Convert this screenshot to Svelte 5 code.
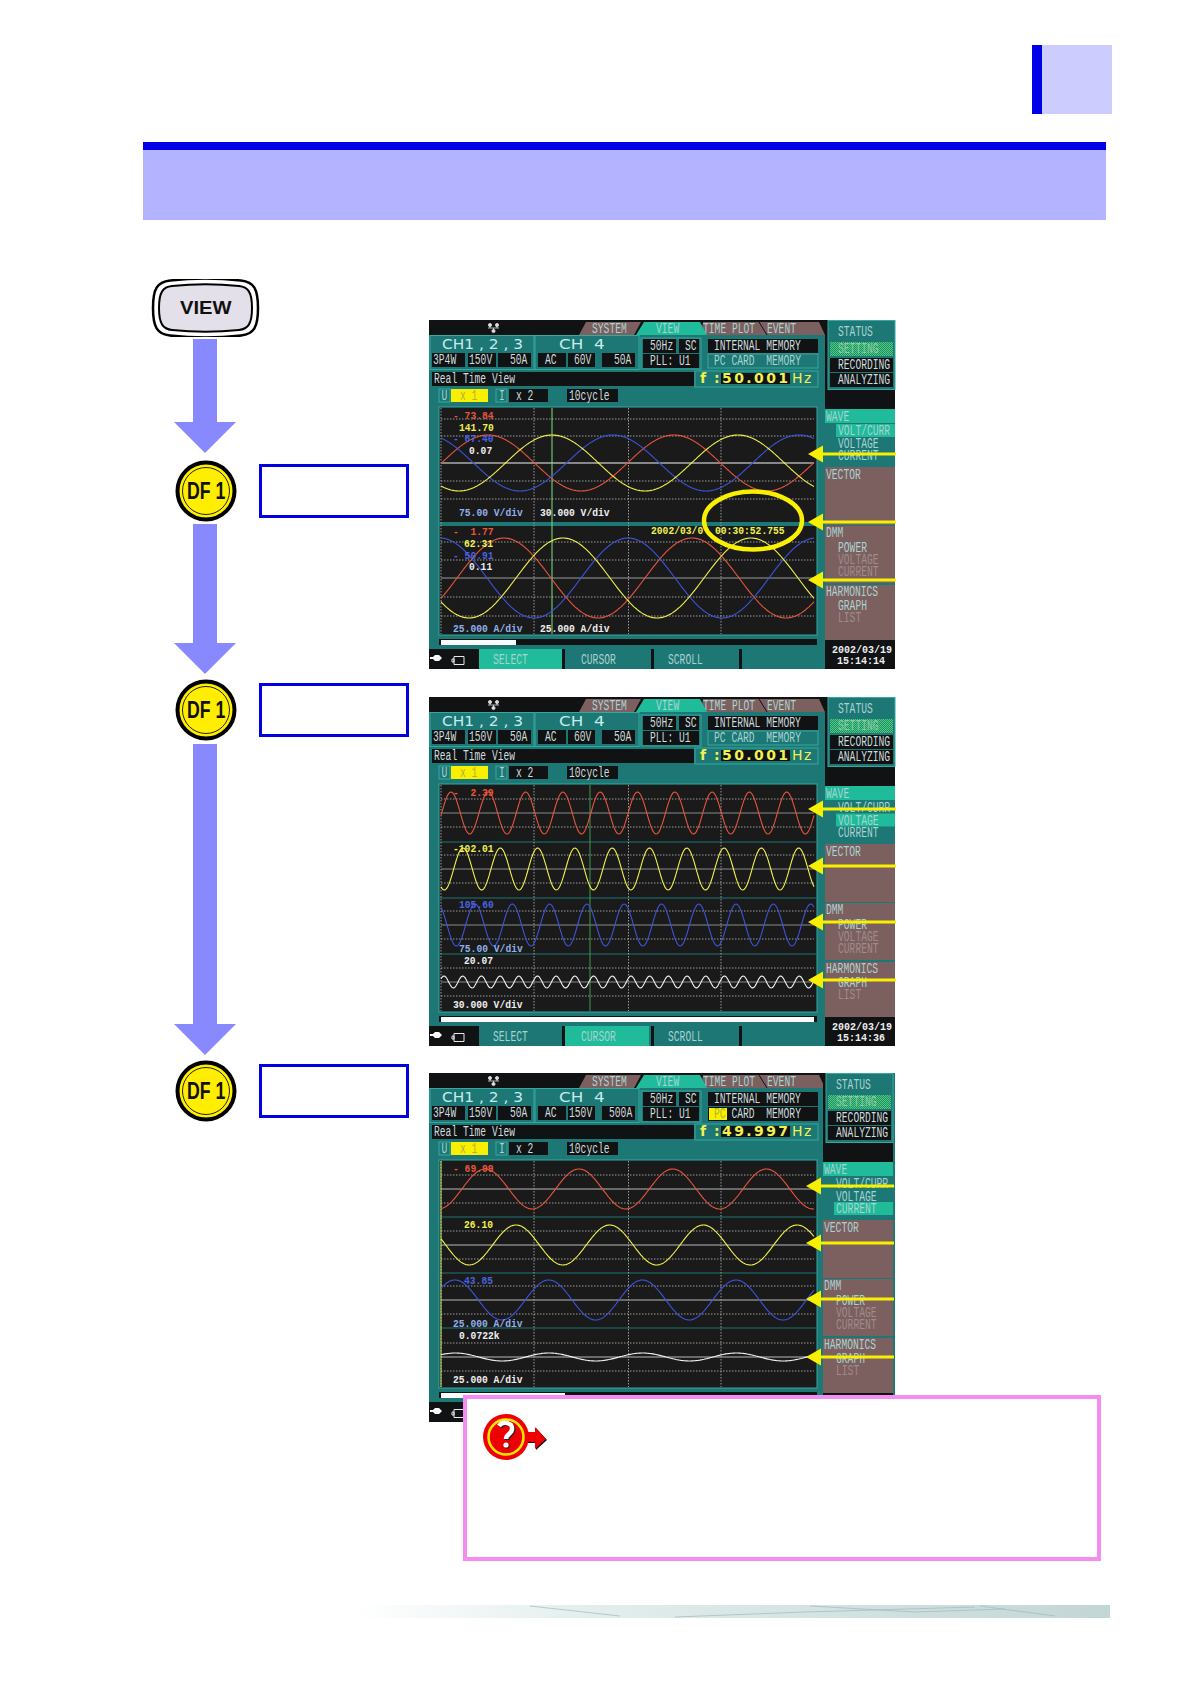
<script>
  // Each screen is one instrument display, drawn in its own 467x350 coordinates
  const screens = [
    {
      ch4: ["AC", "60V", "50A"],
      freq: "50.001",
      pcCard: false,
      menu: "VOLT/CURR",
      softkey: "SELECT",
      time: "15:14:14",
      shift: 0,
      cursor: { x: 123, color: "#7fe07f" },
      bar: 87,
      arrows: [134, 202, 260],
      panes: [
        { top: 87, bottom: 200, mid: 143, midColor: "#f4f4f4", dots: [99, 116, 161, 179] },
        { top: 204, bottom: 315, mid: 258, midColor: "#9a9a9a", dots: [222, 240, 277, 296] },
      ],
      traces: [
        { mid: 143, amp: 28, period: 186, peak: 59, color: "#e8553c" },
        { mid: 143, amp: 28, period: 186, peak: 184, color: "#3c54dc" },
        { mid: 143, amp: 28, period: 186, peak: 123, color: "#f2f24a" },
        { mid: 258, amp: 40, period: 188, peak: 75, color: "#e8553c" },
        { mid: 258, amp: 40, period: 188, peak: 199, color: "#3c54dc" },
        { mid: 258, amp: 40, period: 188, peak: 134, color: "#f2f24a" },
      ],
      labels: [
        [24, 99, "- 73.84", "red"],
        [30, 111, "141.70", "yel"],
        [24, 122, "- 67.40", "blu"],
        [40, 134, "0.07", "whi"],
        [30, 196, "75.00 V/div", "sky"],
        [111, 196, "30.000 V/div", "whi"],
        [24, 215, "-  1.77", "red"],
        [35, 227, "62.31", "yel"],
        [24, 239, "- 50.91", "blu"],
        [40, 250, "0.11", "whi"],
        [24, 312, "25.000 A/div", "sky"],
        [111, 312, "25.000 A/div", "whi"],
        [222, 214, "2002/03/0", "yel"],
        [286, 214, "00:30:52.755", "yel"],
      ],
      ring: true,
    },
    {
      ch4: ["AC", "60V", "50A"],
      freq: "50.001",
      pcCard: false,
      menu: "VOLTAGE",
      softkey: "CURSOR",
      time: "15:14:36",
      shift: 0,
      cursor: { x: 161, color: "#3f9a4f" },
      bar: 385,
      arrows: [112, 169, 225, 283],
      panes: [
        { top: 87, bottom: 145, mid: 116, midColor: "#8a8a8a", dots: [102, 130] },
        { top: 145, bottom: 201, mid: 172, midColor: "#8a8a8a", dots: [158, 186] },
        { top: 201, bottom: 257, mid: 228, midColor: "#8a8a8a", dots: [214, 242] },
        { top: 257, bottom: 314, mid: 285, midColor: "#8a8a8a", dots: [271, 299] },
      ],
      traces: [
        { mid: 116, amp: 21, period: 37.3, peak: 22, color: "#e8553c" },
        { mid: 172, amp: 21, period: 37.3, peak: 34, color: "#f2f24a" },
        { mid: 228, amp: 21, period: 37.3, peak: 46, color: "#3c54dc" },
        { mid: 285, amp: 6, period: 18.7, peak: 15, color: "#f4f4f4" },
      ],
      labels: [
        [24, 99, "-  2.39", "red"],
        [24, 155, "-102.01", "yel"],
        [30, 211, "105.60", "blu"],
        [30, 255, "75.00 V/div", "sky"],
        [35, 267, "20.07", "whi"],
        [24, 311, "30.000 V/div", "whi"],
      ],
    },
    {
      ch4: ["AC", "150V", "500A"],
      freq: "49.997",
      pcCard: true,
      menu: "CURRENT",
      softkey: "",
      time: "",
      shift: -2,
      cursor: { x: 12, color: "#c8e86a" },
      bar: 136,
      arrows: [113, 170, 226, 284],
      panes: [
        { top: 87, bottom: 144, mid: 116, midColor: "#b8b8b8", dots: [102, 130] },
        { top: 144, bottom: 200, mid: 172, midColor: "#b8b8b8", dots: [158, 186] },
        { top: 200, bottom: 255, mid: 227, midColor: "#b8b8b8", dots: [213, 241] },
        { top: 255, bottom: 314, mid: 284, midColor: "#b8b8b8", dots: [270, 298] },
      ],
      traces: [
        { mid: 116, amp: 20, period: 93.7, peak: 150, color: "#e8553c" },
        { mid: 172, amp: 20, period: 93.7, peak: 87, color: "#f2f24a" },
        { mid: 227, amp: 20, period: 93.7, peak: 26, color: "#3c54dc" },
        { mid: 284, amp: 4, period: 93.7, peak: 120, color: "#f4f4f4" },
      ],
      labels: [
        [24, 99, "- 69.99", "red"],
        [35, 155, "26.10", "yel"],
        [35, 211, "43.85", "blu"],
        [24, 254, "25.000 A/div", "sky"],
        [30, 266, "0.0722k", "whi"],
        [24, 310, "25.000 A/div", "whi"],
      ],
    },
  ];

  const softkeys = [
    { name: "SELECT", x: 50, w: 83, tx: 64 },
    { name: "CURSOR", x: 136, w: 84, tx: 152 },
    { name: "SCROLL", x: 225, w: 83, tx: 239 },
    { name: "", x: 313, w: 83, tx: 0 },
  ];

  const verticals = [105, 199.5, 292];

  function wave({ mid, amp, period, peak }) {
    const pts = [];
    for (let x = 12; x <= 385; x += 1) {
      const y = mid - amp * Math.cos((2 * Math.PI * (x - peak)) / period);
      pts.push(x + "," + y.toFixed(1));
    }
    return pts.join(" ");
  }
</script>

<!-- the instrument font is narrow and tall: 15px mono squeezed to a 5.8px pitch -->
{#snippet txt(x, y, s, cls = "")}
  <text transform="translate({x} {y}) scale(0.644 1)" class="narrow {cls}">{s}</text>
{/snippet}

{#snippet cell(x, y, w, s, tx, cls = "")}
  <rect {x} {y} width={w} height="14" class="black" />
  {@render txt(tx, y + 11, s, cls)}
{/snippet}

{#snippet screen(sc, index)}
  <svg class="screen" width="467" height="350" viewBox="0 0 467 350">
    <defs>
      <pattern id="hatch{index}" width="2" height="2" patternUnits="userSpaceOnUse">
        <rect width="2" height="2" fill="#1f8f5c" />
        <rect width="1" height="1" fill="#4fc98a" />
        <rect x="1" y="1" width="1" height="1" fill="#4fc98a" />
      </pattern>
    </defs>

    <rect width="466" height="349" class="teal" />
    <rect width="396" height="15" class="black" />

    <!-- network icon -->
    <g class="net">
      <circle cx="61" cy="5" r="1.6" /><circle cx="68" cy="5" r="1.6" /><circle cx="64.5" cy="11" r="1.6" />
      <path d="M59 8h11M64.5 8v3M61 5v3M68 5v3" />
    </g>

    <!-- tabs -->
    <path d="M150 15 L157 2 H212 L205 15Z" class="brown" />
    <path d="M272 15 L274 2 H390 L396 15Z" class="brown" />
    <path d="M207 15 L215 2 H271 L278 15Z" class="bright" />
    <path d="M330 2 L338 15" class="tabline" />
    {@render txt(163, 12.5, "SYSTEM", "pale")}
    {@render txt(227, 12.5, "VIEW", "pale")}
    {@render txt(274, 12.5, "TIME PLOT", "pale")}
    {@render txt(338, 12.5, "EVENT", "pale")}

    <!-- channel boxes -->
    <rect x="1" y="15.5" width="104" height="34" class="box" />
    <rect x="106" y="15.5" width="104" height="34" class="box" />
    <text transform="translate(13 29) scale(1.1 1)" class="wide">CH1 , 2 , 3</text>
    <text transform="translate(130 29) scale(1.2 1)" class="wide">CH  4</text>
    {@render cell(3, 33, 33, "3P4W", 4, "light")}
    {@render cell(39, 33, 28, "150V", 40, "light")}
    {@render cell(69, 33, 33, "50A", 81, "light")}
    {@render cell(109, 33, 28, sc.ch4[0], 116, "light")}
    {@render cell(139, 33, 27, sc.ch4[1], sc.ch4[1].length > 3 ? 140 : 145, "light")}
    {@render cell(173, 33, 33, sc.ch4[2], sc.ch4[2].length > 3 ? 180 : 185, "light")}

    <!-- line filter and sync -->
    <rect x="212" y="18" width="60" height="31" class="box" />
    {@render cell(214, 19, 33, "50Hz", 221, "light")}
    {@render cell(250, 19, 20, "SC", 256, "light")}
    <rect x="214" y="34" width="56" height="14" class="black" />
    {@render txt(221, 45, "PLL: U1", "light")}

    <!-- memory -->
    {@render cell(279, 19, 110, "INTERNAL MEMORY", 285, "light")}
    <rect x="279" y="34" width="110" height="14" class={sc.pcCard ? "black" : "box"} />
    {#if sc.pcCard}
      <rect x="280" y="35" width="18" height="12" class="yellow" />
    {/if}
    {@render txt(285, 45, "PC", sc.pcCard ? "dim" : "pale")}
    {@render txt(302.4, 45, "CARD  MEMORY", sc.pcCard ? "light" : "pale")}

    <!-- title and frequency -->
    <rect x="3" y="52" width="262" height="14" class="black" />
    {@render txt(5, 63, "Real Time View", "light")}
    <rect x="266" y="51" width="123" height="16" class="box" />
    <text x="271" y="63" class="big yel spread">f :</text>
    <rect x="292" y="53" width="69" height="11" class="black" />
    <text x="293" y="63" class="big yel wide-gap">{sc.freq}</text>
    <text x="363" y="63" class="thin yel spread">Hz</text>

    <!-- scale row -->
    <rect x="10" y="69" width="11" height="13" class="box" />
    {@render txt(12.5, 80, "U", "pale")}
    <rect x="22" y="69" width="37" height="13" class="yellow" />
    {@render txt(31, 80, "x 1", "dim")}
    <rect x="67" y="69" width="11" height="13" class="box" />
    {@render txt(70, 80, "I", "pale")}
    <rect x="80" y="69" width="39" height="13" class="black" />
    {@render txt(87, 80, "x 2", "light")}
    <rect x="138" y="69" width="51" height="13" class="black" />
    {@render txt(140, 80, "10cycle", "light")}

    <!-- plot -->
    <rect x="10" y="87" width="378" height="228" class="plot" />
    {#each sc.panes as pane, i}
      {#each pane.dots as y}
        <line x1="12" x2="385" y1={y} y2={y} class="dot" />
      {/each}
      <line x1="12" x2="385" y1={pane.mid} y2={pane.mid} stroke={pane.midColor} />
      {#if i > 0}
        <line x1="10" x2="388" y1={pane.top} y2={pane.top} class={sc.ring ? "split" : "sep"} />
      {/if}
    {/each}
    {#each verticals as x}
      <line x1={x} x2={x} y1="88" y2="314" class="dot" />
    {/each}
    <line x1="12" x2="12" y1="88" y2="314" class="dot" />
    <line x1={sc.cursor.x} x2={sc.cursor.x} y1="88" y2="314" stroke={sc.cursor.color} />
    {#each sc.traces as t}
      <polyline points={wave(t)} class="trace" stroke={t.color} />
    {/each}
    {#each sc.labels as [x, y, s, cls]}
      <text transform="translate({x} {y}) scale(0.967 1)" class="reading {cls}">{s}</text>
    {/each}

    <!-- scroll bar -->
    <rect x="10" y="319" width="378" height="6" class="black" />
    <rect x="12" y="320" width={sc.bar - 12} height="5" class="white" />

    <!-- bottom keys -->
    <rect y="329" width="50" height="20" class="black" />
    <path d="M1 337h3l2-2h4l3 3-3 3h-4l-2-2h-3z" class="white" />
    <path d="M25 336.5h10v8h-10zM23 339h2v3h-2z" class="outline" />
    {#each softkeys as key}
      <rect x={key.x} y="329" width={key.w} height="20" class={sc.softkey === key.name ? "bright" : "teal"} />
      <rect x={key.x - 3} y="329" width="3" height="20" class="black" />
      {#if key.name}
        {@render txt(key.tx, 343.5, key.name, "pale")}
      {/if}
    {/each}

    <!-- right column -->
    <g transform="translate({sc.shift} 0)">
      <rect x="396" y="0" width="70" height="89" class="black" />
      <rect x="399" y="0.5" width="67" height="69" class="box" />
      {@render txt(409, 16, "STATUS", "pale")}
      <rect x="401" y="22" width="63" height="14" fill="url(#hatch{index})" />
      {@render txt(409, 33, "SETTING", "dim2")}
      <rect x="401" y="38" width="63" height="14" class="black" />
      {@render txt(409, 49, "RECORDING", "light")}
      <rect x="401" y="53" width="63" height="14" class="black" />
      {@render txt(409, 64, "ANALYZING", "light")}

      <rect x="396" y="89" width="70" height="14" class="bright" />
      {@render txt(397, 101, "WAVE", "pale")}
      <rect x="396" y="103" width="70" height="41" class="teal" />
      {#each ["VOLT/CURR", "VOLTAGE", "CURRENT"] as item, i}
        {#if sc.menu === item}
          <rect x="407" y={104 + i * 12.5} width="59" height="13" class="bright" />
        {/if}
        {@render txt(409, 115 + i * 12.5, item, "pale")}
      {/each}

      <rect x="396" y="147" width="70" height="58" class="brown" />
      {@render txt(397, 159, "VECTOR", "pale")}
      <rect x="396" y="206" width="70" height="57" class="brown" />
      {@render txt(397, 217, "DMM", "pale")}
      {@render txt(409, 232, "POWER", "pale")}
      {@render txt(409, 244, "VOLTAGE", "faded")}
      {@render txt(409, 256, "CURRENT", "faded")}
      <rect x="396" y="265" width="70" height="55" class="brown" />
      {@render txt(397, 276, "HARMONICS", "pale")}
      {@render txt(409, 290, "GRAPH", "pale")}
      {@render txt(409, 302, "LIST", "faded")}

      <rect x="396" y="320" width="70" height="29" class="black" />
      <text x="403" y="333" class="reading whi">2002/03/19</text>
      <text x="408" y="344" class="reading whi">{sc.time}</text>

      <!-- call-outs laid over the display -->
      {#each sc.arrows as y}
        <path d="M379 {y} l15 -8.5 v7 h73 v3 h-73 v7 z" class="yellow" />
      {/each}
    </g>
    {#if sc.ring}
      <ellipse cx="324" cy="200.5" rx="49" ry="29" class="ring" />
    {/if}
  </svg>
{/snippet}

{#snippet arrow(height, gap)}
  <svg class="flow" style="margin-top: {gap}px" width="62" {height} viewBox="0 0 62 {height}">
    <path d="M19 0h24V{height - 31}h19L31 {height}L0 {height - 31}h19z" />
  </svg>
{/snippet}

{#snippet step(gap)}
  <div class="step" style="margin-top: {gap}px">
    <svg width="62" height="62" viewBox="0 0 62 62">
      <circle cx="31" cy="31" r="28.5" class="df-outer" />
      <circle cx="31" cy="31" r="23.5" class="df-inner" />
      <text transform="translate(12 39) scale(0.77 1)" class="df-text">DF 1</text>
    </svg>
    <div class="label"></div>
  </div>
{/snippet}

<div class="page">
  <header>
    <div class="corner"></div>
    <div class="band"></div>
  </header>

  <main>
    <div class="flowchart">
      <svg class="key" width="109" height="58" viewBox="-1 0 109 58">
        <path d="M18 1.5C40 -1 67 -1 89 1.5C102 3 106 10 106 29C106 48 102 55 89 56.5C67 59 40 59 18 56.5C5 55 1 48 1 29C1 10 5 3 18 1.5Z" class="key-outer" />
        <path d="M20 7C40 5 67 5 87 7C96 8 100 13 100 29C100 45 96 50 87 51C67 53 40 53 20 51C11 50 7 45 7 29C7 13 11 8 20 7Z" class="key-inner" />
        <text transform="translate(28 34.5) scale(1.12 1)" class="key-text">VIEW</text>
      </svg>
      {@render arrow(114, 2)}
      {@render step(7)}
      {@render arrow(150, 2)}
      {@render step(5)}
      {@render arrow(311, 3)}
      {@render step(5)}
    </div>

    <div class="screens">
      {#each screens as sc, i}
        {@render screen(sc, i)}
      {/each}
    </div>
  </main>

  <aside class="note">
    <svg width="68" height="50" viewBox="0 0 68 50">
      <path d="M39 21h15v-5l11 12-11 10v-7H39z" class="hint-shadow" />
      <path d="M38 20h15v-5l11 12-11 10v-7H38z" class="hint-red" />
      <circle cx="24" cy="25" r="23" class="hint-red" />
      <circle cx="24" cy="25" r="17.5" class="hint-ring" />
      <path d="M18 15c3-5 14-4 13 3c0 5-6 5-6 10" class="hint-back" />
      <path d="M17 14c3-5 14-4 13 3c0 5-6 5-6 10" class="hint-q" />
      <circle cx="25" cy="34" r="2.6" fill="#222" />
      <circle cx="24" cy="33" r="2.6" fill="#fff" />
    </svg>
  </aside>

  <footer>
    <svg width="755" height="13" viewBox="0 0 755 13">
      <defs>
        <linearGradient id="strip">
          <stop offset="0" stop-color="#fff" />
          <stop offset="0.3" stop-color="#e4eeee" />
          <stop offset="0.6" stop-color="#d5e3e3" />
          <stop offset="1" stop-color="#c3d6d6" />
        </linearGradient>
      </defs>
      <rect width="755" height="13" fill="url(#strip)" />
      <path d="M175 1L265 11M320 12L450 7L620 2M455 1L560 7L650 4M625 1L700 11" class="strip-lines" />
    </svg>
  </footer>
</div>

<style>
  :global(body) {
    background: #fff;
  }

  .page {
    position: relative;
    width: 1190px;
    height: 1684px;
    overflow: hidden;
    background: #fff;
  }

  header {
    padding: 45px 84px 0 143px;
  }
  .corner {
    width: 70px;
    height: 69px;
    margin-left: 889px;
    background: #ccccff;
    border-left: 10px solid #0000e6;
  }
  .band {
    height: 70px;
    margin-top: 28px;
    background: #b3b3ff;
    border-top: 8px solid #0000e6;
  }

  main {
    display: grid;
    grid-template-columns: 277px 467px;
    margin: 59px 0 0 152px;
  }

  .flowchart {
    display: flex;
    flex-direction: column;
  }
  .flow {
    display: block;
    margin-left: 22px;
  }
  .flow path {
    fill: #8888ff;
  }
  .key {
    display: block;
    margin-left: -1px;
  }
  .key-outer {
    fill: #fff;
    stroke: #000;
    stroke-width: 2.5;
  }
  .key-inner {
    fill: #e4e0ea;
    stroke: #000;
    stroke-width: 2;
  }
  .key-text {
    font: bold 18px "Liberation Sans", sans-serif;
    fill: #111;
  }

  .step {
    display: flex;
    align-items: center;
    gap: 22px;
    margin-left: 23px;
  }
  .label {
    width: 144px;
    height: 48px;
    border: 3px solid #0000e0;
  }
  .df-outer {
    fill: #ffee00;
    stroke: #000;
    stroke-width: 4;
  }
  .df-inner {
    fill: none;
    stroke: #222;
    stroke-width: 1;
  }
  .df-text {
    font: bold 23px "Liberation Sans", sans-serif;
    fill: #111;
  }

  .screens {
    display: flex;
    flex-direction: column;
    gap: 26.5px;
    margin: 41px 0 0 -0.5px;
  }
  .screen {
    display: block;
    overflow: visible;
  }

  .teal {
    fill: #1c7775;
  }
  .black {
    fill: #101214;
  }
  .bright {
    fill: #1fbb9b;
  }
  .brown {
    fill: #7c6060;
  }
  .box {
    fill: #1c7775;
    stroke: #35a8a0;
  }
  .yellow {
    fill: #f8f000;
  }
  .white {
    fill: #fafafa;
  }
  .outline {
    fill: none;
    stroke: #e8e8e8;
  }
  .plot {
    fill: #1a1a1a;
    stroke: #35a8a0;
  }
  .net {
    fill: #ddd;
    stroke: #ddd;
    stroke-width: 0.8;
  }
  .tabline {
    stroke: #101214;
  }
  .dot {
    stroke: #9a9a9a;
    stroke-dasharray: 1.5 1.5;
  }
  .trace {
    fill: none;
    stroke-width: 1.1;
  }
  .sep {
    stroke: #1c7775;
  }
  .split {
    stroke: #1c7775;
    stroke-width: 4;
  }
  .ring {
    fill: none;
    stroke: #f8f000;
    stroke-width: 4.5;
  }

  text {
    white-space: pre;
  }
  .narrow {
    font: 15px "Liberation Mono", monospace;
    fill: #c8dcdc;
  }
  .pale {
    fill: #a9d3d0;
  }
  .light {
    fill: #cfdcdc;
  }
  .dim {
    fill: #b8b03a;
  }
  .dim2 {
    fill: #8cc9a8;
  }
  .faded {
    fill: #a08a8a;
  }
  .wide {
    font: 14px "DejaVu Sans", sans-serif;
    fill: #c4ecec;
  }
  .big {
    font: bold 14px "DejaVu Sans", sans-serif;
  }
  .thin {
    font: 14px "DejaVu Sans", sans-serif;
  }
  .spread {
    letter-spacing: 1.5px;
  }
  .wide-gap {
    letter-spacing: 2.4px;
  }
  .reading {
    font: bold 10px "Liberation Mono", monospace;
  }
  .red {
    fill: #e8553c;
  }
  .yel {
    fill: #f0f050;
  }
  .blu {
    fill: #4a62e0;
  }
  .sky {
    fill: #8fb0e8;
  }
  .whi {
    fill: #eeeeee;
  }

  /* lies over the bottom of the third screen */
  .note {
    position: absolute;
    box-sizing: border-box;
    left: 463px;
    top: 1395px;
    width: 638px;
    height: 166px;
    padding: 13px 0 0 15px;
    background: #fff;
    border: 4px solid #f58cf0;
  }
  .note svg {
    display: block;
  }
  .hint-red {
    fill: #ee0000;
  }
  .hint-shadow {
    fill: #111;
  }
  .hint-ring {
    fill: none;
    stroke: #ffe800;
    stroke-width: 2.5;
  }
  .hint-q,
  .hint-back {
    fill: none;
    stroke-width: 4.5;
  }
  .hint-q {
    stroke: #fff;
  }
  .hint-back {
    stroke: #222;
  }

  footer {
    position: absolute;
    left: 355px;
    top: 1605px;
    line-height: 0;
  }
  .strip-lines {
    fill: none;
    stroke: #9fbaba;
    stroke-width: 0.7;
  }
</style>
